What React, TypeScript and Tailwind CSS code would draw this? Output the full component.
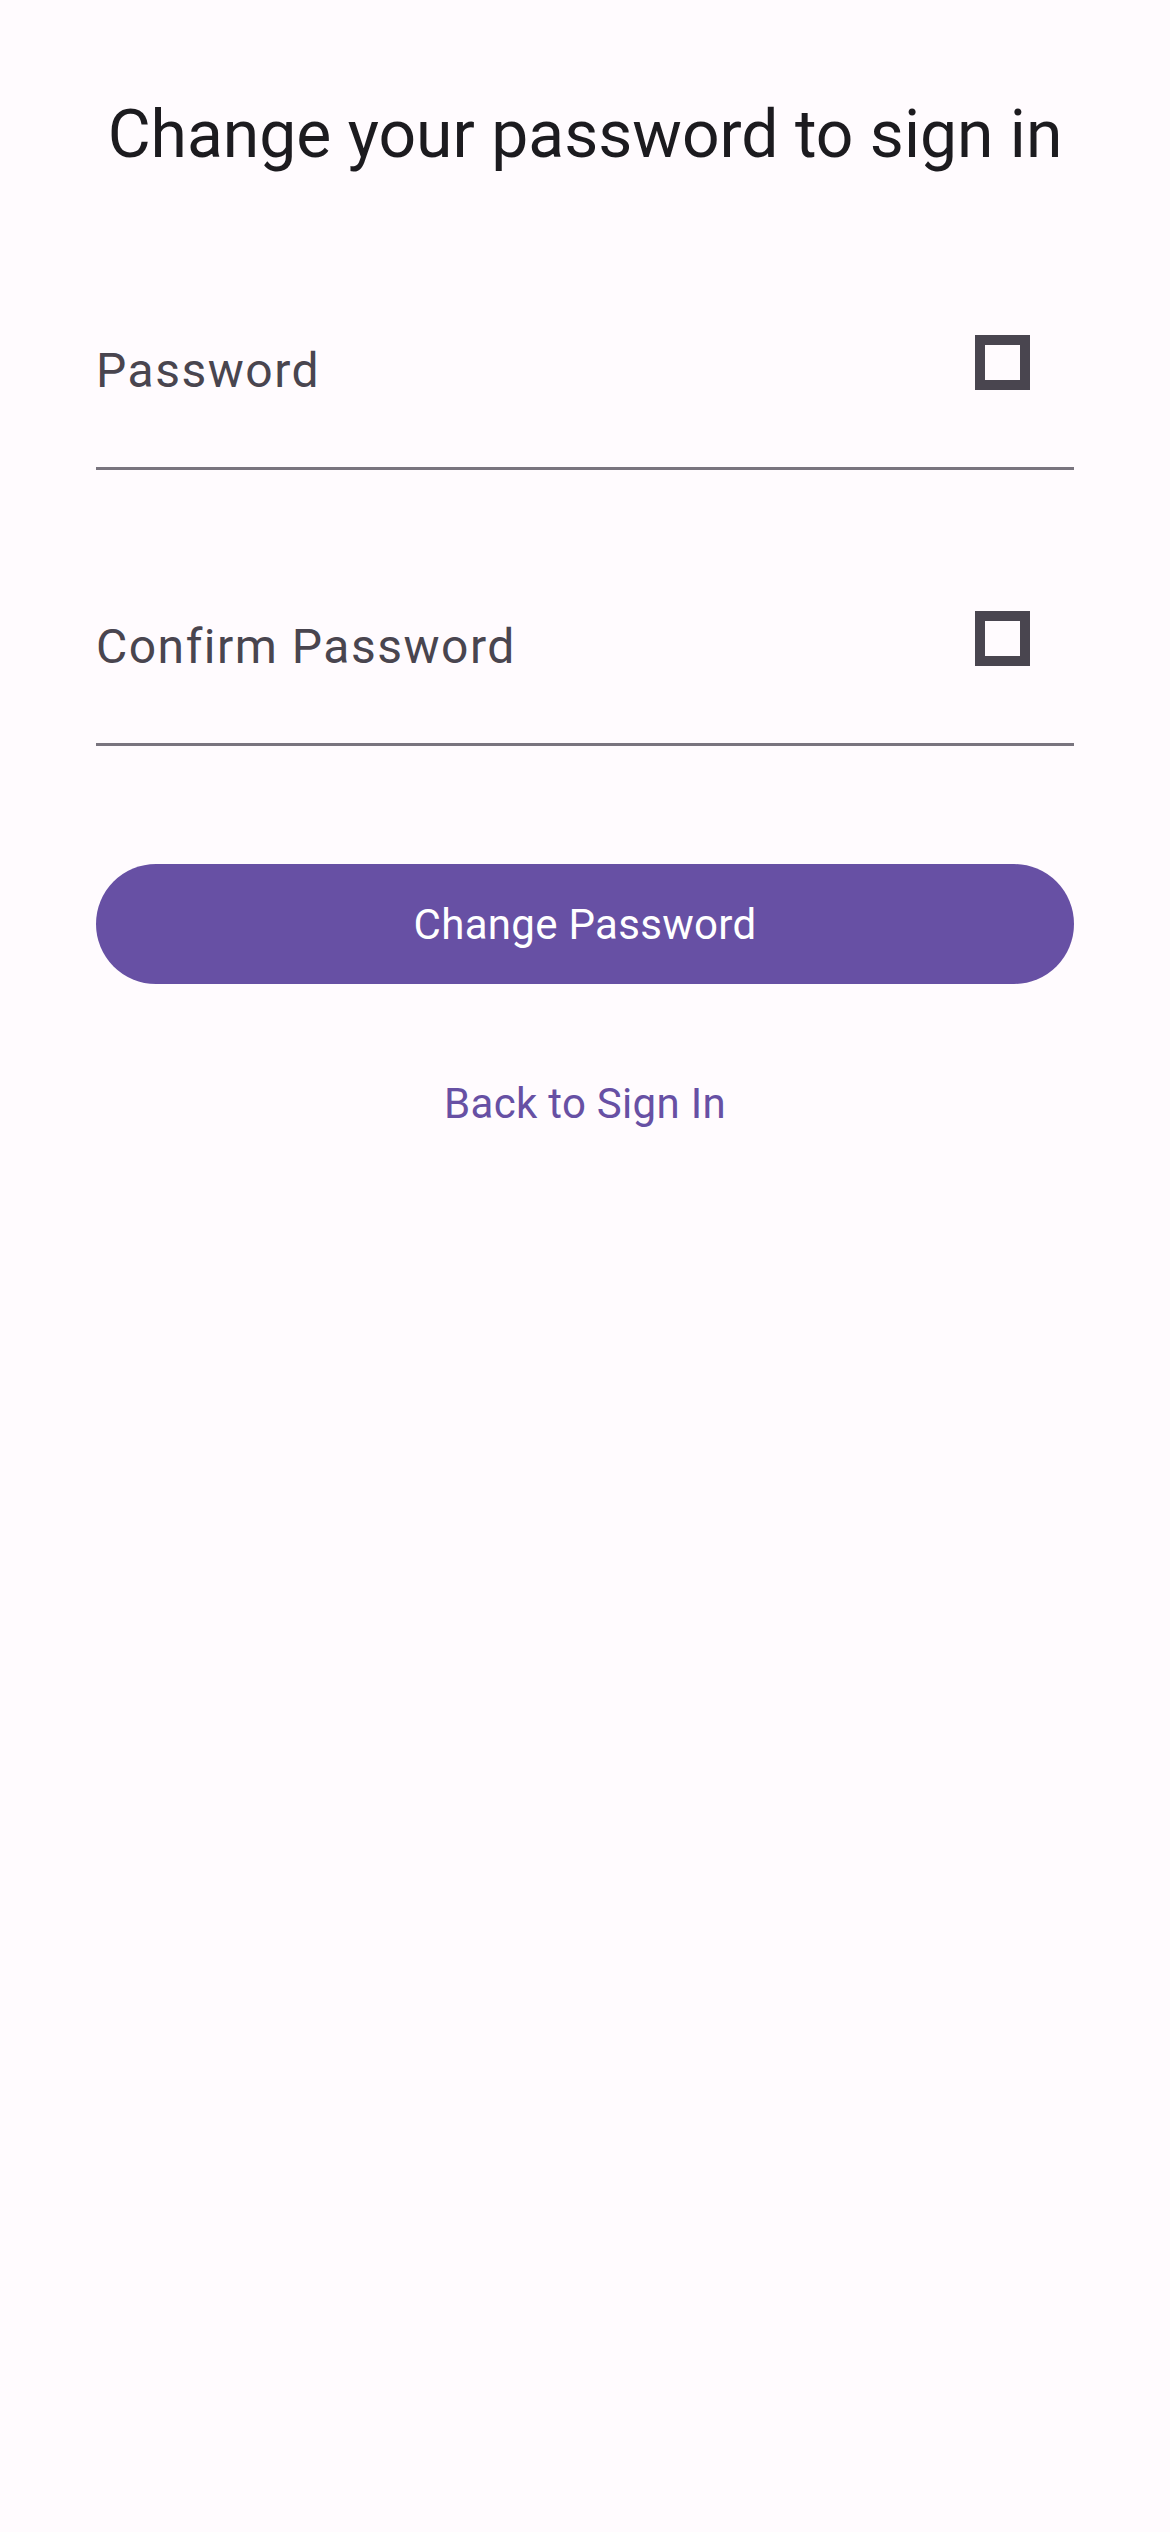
import { useState } from 'react';

function PasswordField({ label }: { label: string }) {
  const [value] = useState('');
  return (
    <div className="flex h-[170px] items-start justify-between border-b-[3px] border-[#79747E]">
      <span className="mt-[43px] text-[48px] leading-[56px] tracking-[1.5px] text-[#49454F]">
        {value || label}
      </span>
      <span className="mr-[44px] mt-[35px] block h-[55px] w-[55px] border-[10px] border-[#49454F]" />
    </div>
  );
}

export default function App() {
  return (
    <div
      className="min-h-[2532px] w-full bg-[#FFFBFE] px-[96px] pt-[93px]"
      style={{ fontFamily: 'Roboto, "Noto Sans", sans-serif' }}
    >
      <h1 className="whitespace-nowrap text-center text-[66px] font-normal leading-[84px] text-[#1C1B1F]">
        Change your password to sign in
      </h1>

      <div className="mt-[123px]">
        <PasswordField label="Password" />
      </div>
      <div className="mt-[106px]">
        <PasswordField label="Confirm Password" />
      </div>

      <button
        type="button"
        className="mt-[118px] flex h-[120px] w-full items-center justify-center rounded-full bg-[#6750A4] text-[42px] font-normal tracking-[0.3px] text-white"
      >
        Change Password
      </button>

      <div className="mt-[96px] text-center">
        <span className="text-[42px] leading-[48px] tracking-[0.3px] text-[#6750A4]">Back to Sign In</span>
      </div>
    </div>
  );
}
